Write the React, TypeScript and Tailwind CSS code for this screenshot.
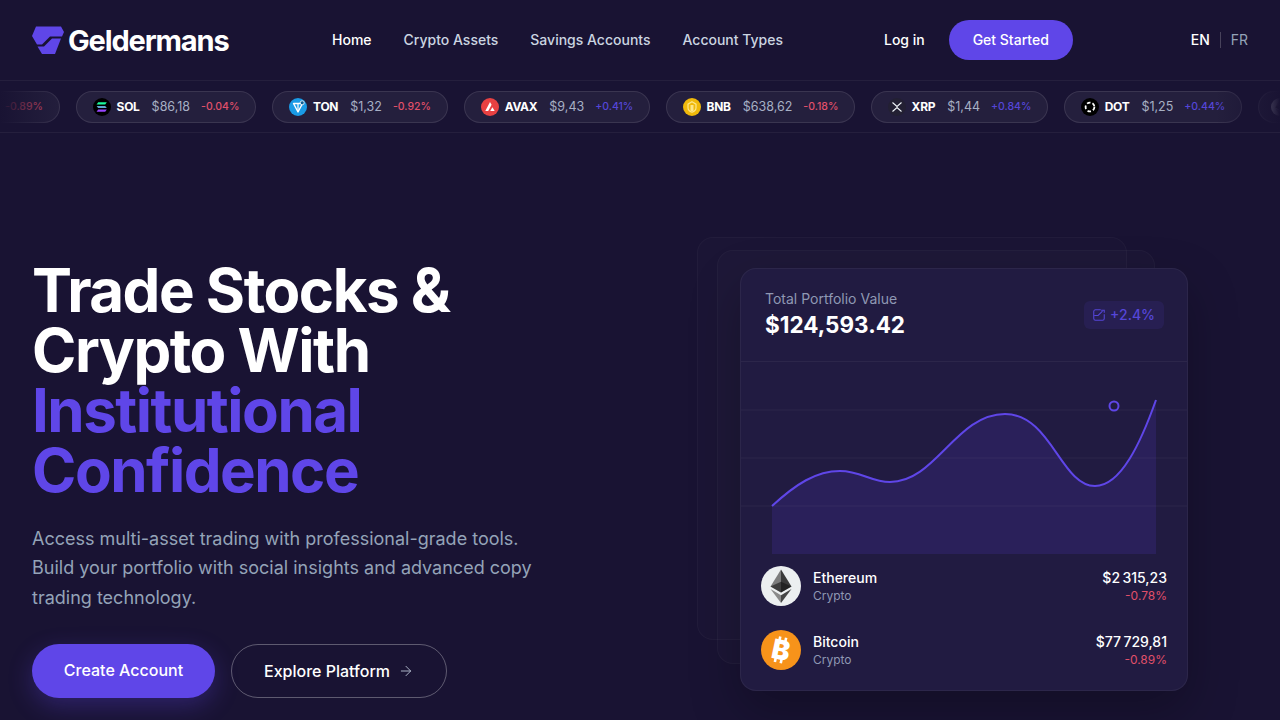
import React from 'react';
import { ArrowRight } from 'lucide-react';

const tickers = [
  { symbol: 'BTC', price: '$77\u202f729,81', change: '-0.89%', up: false, icon: 'btc', cls: 'w-[188px] ml-[-128px] justify-end pr-4' },
  { symbol: 'SOL', price: '$86,18', change: '-0.04%', up: false, icon: 'sol', cls: 'w-[180px] justify-center' },
  { symbol: 'TON', price: '$1,32', change: '-0.92%', up: false, icon: 'ton', cls: 'w-[176px] justify-center' },
  { symbol: 'AVAX', price: '$9,43', change: '+0.41%', up: true, icon: 'avax', cls: 'w-[186px] justify-center' },
  { symbol: 'BNB', price: '$638,62', change: '-0.18%', up: false, icon: 'bnb', cls: 'w-[189px] justify-center' },
  { symbol: 'XRP', price: '$1,44', change: '+0.84%', up: true, icon: 'xrp', cls: 'w-[177px] justify-center' },
  { symbol: 'DOT', price: '$1,25', change: '+0.44%', up: true, icon: 'dot', cls: 'w-[178px] justify-center' },
  { symbol: 'ETH', price: '$2\u202f315,23', change: '-0.78%', up: false, icon: 'eth', cls: 'w-[180px] justify-start pl-3' },
];

const CoinIcon = ({ name }: { name: string }) => {
  if (name === 'sol') {
    return (
      <svg viewBox="0 0 18 18" className="w-[18px] h-[18px] shrink-0">
        <circle cx="9" cy="9" r="9" fill="#000" />
        <path d="M5.2 4.2h8.6l-1.6 2.2H3.6z" fill="#19fb9b" />
        <path d="M3.6 7.9h8.6l1.6 2.2H5.2z" fill="#5fa8d0" />
        <path d="M5.2 11.6h8.6l-1.6 2.2H3.6z" fill="#9945ff" />
      </svg>
    );
  }
  if (name === 'ton') {
    return (
      <svg viewBox="0 0 18 18" className="w-[18px] h-[18px] shrink-0">
        <circle cx="9" cy="9" r="9" fill="#1a9be6" />
        <path d="M4.5 5.5h9L9 14z" fill="none" stroke="#fff" strokeWidth="1.4" strokeLinejoin="round" />
        <path d="M9 5.5V14" stroke="#fff" strokeWidth="1.2" />
        <circle cx="13.2" cy="4.8" r="2" fill="#0c5f96" stroke="#fff" strokeWidth="0.8" />
      </svg>
    );
  }
  if (name === 'avax') {
    return (
      <svg viewBox="0 0 18 18" className="w-[18px] h-[18px] shrink-0">
        <circle cx="9" cy="9" r="9" fill="#e84142" />
        <path d="M9 4l1.6 2.8L7.2 13H4.3z" fill="#fff" />
        <path d="M11.4 9.2L13.7 13H9.2z" fill="#fff" />
      </svg>
    );
  }
  if (name === 'bnb') {
    return (
      <svg viewBox="0 0 18 18" className="w-[18px] h-[18px] shrink-0">
        <circle cx="9" cy="9" r="9" fill="#f0b90b" />
        <path d="M9 3.8l4 2.4v3.6c0 2-1.6 3.7-4 4.4-2.4-.7-4-2.4-4-4.4V6.2z" fill="none" stroke="#fde68a" strokeWidth="1.2" />
        <path d="M7.5 7h3v6h-3z" fill="#fde68a" />
      </svg>
    );
  }
  if (name === 'xrp') {
    return (
      <svg viewBox="0 0 18 18" className="w-[18px] h-[18px] shrink-0">
        <circle cx="9" cy="9" r="9" fill="#232033" />
        <path d="M4.5 4.5L9 8.5l4.5-4M4.5 13.5L9 9.5l4.5 4" fill="none" stroke="#f1f5f9" strokeWidth="1.1" />
      </svg>
    );
  }
  if (name === 'dot') {
    return (
      <svg viewBox="0 0 18 18" className="w-[18px] h-[18px] shrink-0">
        <circle cx="9" cy="9" r="9" fill="#000" />
        <circle cx="9" cy="9" r="4.4" fill="none" stroke="#fff" strokeWidth="1.8" strokeDasharray="3.6 2.1" />
      </svg>
    );
  }
  if (name === 'eth') return <EthIcon className="w-[18px] h-[18px] shrink-0" />;
  return <BtcIcon className="w-[18px] h-[18px] shrink-0" />;
};

const BtcIcon = ({ className }: { className: string }) => (
  <svg viewBox="0 0 40 40" className={className}>
    <circle cx="20" cy="20" r="20" fill="#f7931a" />
    <g transform="rotate(12 20 20)">
      <text x="20" y="29.5" textAnchor="middle" fontSize="27" fontWeight="900" fill="#fff" fontFamily="Inter, sans-serif">B</text>
      <path d="M16.5 7v4M22.5 7v4M16.5 29v4M22.5 29v4" stroke="#fff" strokeWidth="2.6" />
    </g>
  </svg>
);

const EthIcon = ({ className }: { className: string }) => (
  <svg viewBox="0 0 40 40" className={className}>
    <circle cx="20" cy="20" r="20" fill="#eceff0" />
    <path d="M20 3.5L9.5 20.5 20 26.5z" fill="#7d7d7d" />
    <path d="M20 3.5l10.5 17L20 26.5z" fill="#3a3a3a" />
    <path d="M9.5 20.5L20 15.8l10.5 4.7L20 26.5z" fill="#141414" opacity="0.6" />
    <path d="M9.5 23L20 37V29.2z" fill="#8a8a8a" />
    <path d="M30.5 23L20 37V29.2z" fill="#454545" />
  </svg>
);

const Logo = () => (
  <svg viewBox="0 0 32 28" className="w-8 h-7 shrink-0">
    <path d="M4 0.5H29L32 6L30 10.5H18L10 18.5H5L0 10Z" fill="#5f46e8" />
    <path d="M29 12.5H20L12 20.5H5.5L10 28H23Z" fill="#5f46e8" />
  </svg>
);

const ChartSvg = () => (
  <svg viewBox="0 0 446 192" className="w-full h-[192px] block">
    <path
      d="M31 144C55 122 75 109 99 109C120 109 130 120 149 120C195 120 215 52 264 52C310 52 320 124 354 124C380 124 400 80 415 38V192H31Z"
      fill="#5f46e8"
      fillOpacity="0.15"
    />
    <path d="M0 48H446M0 96H446M0 144H446" stroke="#ffffff" strokeOpacity="0.05" />
    <path
      d="M31 144C55 122 75 109 99 109C120 109 130 120 149 120C195 120 215 52 264 52C310 52 320 124 354 124C380 124 400 80 415 38"
      fill="none"
      stroke="#5f46e8"
      strokeWidth="2"
    />
    <circle cx="373" cy="44" r="4.5" fill="none" stroke="#5f46e8" strokeWidth="2" />
  </svg>
);

const assets = [
  { name: 'Ethereum', price: '$2\u202f315,23', change: '-0.78%', eth: true },
  { name: 'Bitcoin', price: '$77\u202f729,81', change: '-0.89%', eth: false },
];

export default function App() {
  return (
    <div className="h-[720px] overflow-hidden bg-[#191333] text-white font-['Inter',sans-serif]">
      {/* Nav */}
      <header className="h-[81px] border-b border-white/5 pl-8 pr-8 flex items-center">
        <div className="flex items-center gap-1 w-[300px]">
          <Logo />
          <span className="text-[29px] font-bold tracking-[-0.04em] leading-none">Geldermans</span>
        </div>
        <nav className="flex items-center gap-8 text-sm font-medium text-[#cbd5e1] w-[552px]">
          <a className="text-white">Home</a>
          <a>Crypto Assets</a>
          <a>Savings Accounts</a>
          <a>Account Types</a>
        </nav>
        <a className="text-sm font-medium mr-6">Log in</a>
        <a className="h-10 w-[124px] rounded-full bg-[#5f46e8] flex items-center justify-center text-sm font-medium">Get Started</a>
        <div className="ml-auto flex items-center gap-[10px] text-sm">
          <span className="font-medium">EN</span>
          <span className="w-px h-4 bg-white/20" />
          <span className="text-[#94a3b8]">FR</span>
        </div>
      </header>

      {/* Ticker */}
      <div className="relative h-[52px] border-b border-white/5 overflow-hidden flex items-center gap-4">
        {tickers.map((t) => (
          <div
            key={t.symbol}
            className={`${t.cls} h-8 shrink-0 rounded-full border border-white/10 bg-white/5 flex items-center gap-2 text-xs leading-4 whitespace-nowrap`}
          >
            <CoinIcon name={t.icon} />
            <span className="font-bold tracking-tight -ml-0.5">{t.symbol}</span>
            <span className="text-[12.5px] leading-4 text-[#a7b0c4] ml-1">{t.price}</span>
            <span className={`text-[10.5px] leading-4 font-medium ml-[3px] ${t.up ? 'text-[#5546d8]' : 'text-[#e0506a]'}`}>{t.change}</span>
          </div>
        ))}
        <div className="absolute left-0 top-0 bottom-0 w-16 bg-gradient-to-r from-[#191333] to-transparent" />
        <div className="absolute right-0 top-0 bottom-0 w-16 bg-gradient-to-l from-[#191333] to-transparent" />
      </div>

      {/* Hero */}
      <main className="flex pl-8 pt-[127px]">
        <div className="w-[708px] shrink-0">
          <h1 className="text-[60px] leading-[60px] font-bold tracking-[-0.025em]">
            Trade Stocks &amp;<br />
            Crypto With<br />
            <span className="text-[#5f46e8]">Institutional<br />Confidence</span>
          </h1>
          <p className="mt-6 w-[520px] text-lg leading-[29.25px] text-[#94a3b8]">
            Access multi-asset trading with professional-grade tools. Build your portfolio with social insights and advanced copy trading technology.
          </p>
          <div className="mt-8 flex gap-4">
            <a className="h-[54px] w-[183px] pb-0.5 rounded-full bg-[#5f46e8] flex items-center justify-center font-medium shadow-[0_8px_24px_rgba(95,70,232,0.3)]">Create Account</a>
            <a className="h-[54px] w-[216px] rounded-full border border-white/30 flex items-center justify-center gap-2 font-medium">
              Explore Platform
              <ArrowRight strokeWidth={1.5} className="w-4 h-4 text-[#aab2c5]" />
            </a>
          </div>
        </div>

        <div className="relative w-[448px] h-[423px] mt-2 shrink-0">
          {/* stacked backing cards */}
          <div className="absolute left-[-43px] top-[-31px] w-[430px] h-[403px] rounded-2xl border border-white/[0.03] bg-white/[0.01]" />
          <div className="absolute left-[-23px] top-[-18px] w-[438px] h-[414px] rounded-2xl border border-white/[0.03] bg-white/[0.015]" />
          <div className="relative h-full rounded-2xl border border-white/5 bg-[#211b41] shadow-[0_20px_50px_rgba(0,0,0,0.25)]">
            <div className="h-[93px] pl-6 pr-[23px] pt-[21px] border-b border-white/5 flex justify-between">
              <div>
                <div className="text-sm leading-[18px] text-[#8f98b3]">Total Portfolio Value</div>
                <div className="text-[22.5px] leading-[34px] font-bold">$124,593.42</div>
              </div>
              <div className="mt-[11px] h-7 pl-2 pr-[9px] rounded-md bg-[#5f46e8]/10 flex items-center gap-1 text-sm font-medium text-[#5546d8]">
                <svg viewBox="0 0 16 16" className="w-[14px] h-[14px]" fill="none" stroke="currentColor" strokeWidth="1.2">
                  <path d="M10 2H4a2 2 0 0 0-2 2v8a2 2 0 0 0 2 2h8a2 2 0 0 0 2-2V7" />
                  <path d="M2.5 8.5H7L12 3.5M10.5 2.5h3.5v3" />
                </svg>
                +2.4%
              </div>
            </div>
            <ChartSvg />
            <div className="px-5 pt-3 flex flex-col gap-[24px]">
              {assets.map((a) => (
                <div key={a.name} className="h-10 flex items-center gap-3">
                  {a.eth ? <EthIcon className="w-10 h-10" /> : <BtcIcon className="w-10 h-10" />}
                  <div className="flex-1">
                    <div className="text-sm leading-[20px] font-medium">{a.name}</div>
                    <div className="text-xs leading-4 text-[#8f98b3]">Crypto</div>
                  </div>
                  <div className="text-right">
                    <div className="text-sm leading-[20px] font-medium">{a.price}</div>
                    <div className="text-xs leading-4 text-[#e0506a]">{a.change}</div>
                  </div>
                </div>
              ))}
            </div>
          </div>
        </div>
      </main>
    </div>
  );
}
